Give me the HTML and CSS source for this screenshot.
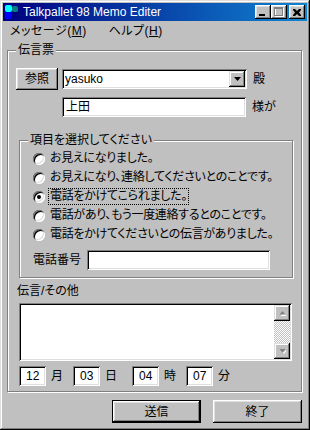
FILE: index.html
```html
<!DOCTYPE html>
<html lang="ja">
<head>
  <meta charset="UTF-8">
  <title>Talkpallet 98 Memo Editer</title>
  <link rel="stylesheet" href="styles.css">
</head>
<body>

  <div class="window">
    <div class="titlebar">
      <svg class="app-icon" width="16" height="16" viewBox="0 0 16 16">
        <rect x="1" y="1" width="7" height="7" rx="2" fill="#00ffff"/>
        <rect x="8" y="2" width="6" height="6" rx="2" fill="#008080"/>
        <rect x="1" y="8" width="7" height="7" rx="2" fill="#0000ff"/>
        <rect x="8" y="8" width="6" height="6" rx="2" fill="#000080"/>
      </svg>
      <span class="title">Talkpallet 98 Memo Editer</span>
      <div class="title-buttons">
        <span class="tbtn">
          <svg width="8" height="7" viewBox="0 0 8 7"><rect x="0" y="5" width="6" height="2" fill="#000"/></svg>
        </span>
        <span class="tbtn">
          <svg width="10" height="10" viewBox="0 0 10 10">
            <rect x="1.5" y="1.5" width="8" height="8" fill="none" stroke="#fff"/>
            <rect x="0.5" y="0.5" width="8" height="8" fill="none" stroke="#808080"/>
            <rect x="0" y="1" width="9" height="1" fill="#808080"/>
          </svg>
        </span>
        <span class="tbtn close">
          <svg width="8" height="7" viewBox="0 0 8 7">
            <path d="M0 0h2l2 2 2-2h2v1l-2 2.5 2 2.5v1h-2l-2-2-2 2h-2v-1l2-2.5-2-2.5z" fill="#000"/>
          </svg>
        </span>
      </div>
    </div>

    <div class="menubar">
      <span class="menu-item">メッセージ(<u>M</u>)</span>
      <span class="menu-item">ヘルプ(<u>H</u>)</span>
    </div>

    <div class="content">
      <fieldset class="group main-group">
        <legend>伝言票</legend>

        <div class="row to-row">
          <span class="btn ref">参照</span>
          <div class="field combo">
            <span class="combo-text">yasuko</span>
            <span class="combo-btn">
              <svg width="7" height="4" viewBox="0 0 7 4"><path d="M0 0h7l-3.5 4z" fill="#000"/></svg>
            </span>
          </div>
          <span class="suffix">殿</span>
        </div>

        <div class="row name-row">
          <div class="field name">上田</div>
          <span class="suffix">様が</span>
        </div>

        <fieldset class="group choice-group">
          <legend>項目を選択してください</legend>
          <div class="radio"><span class="dot"></span><span class="radio-text">お見えになりました。</span></div>
          <div class="radio"><span class="dot"></span><span class="radio-text">お見えになり、連絡してくださいとのことです。</span></div>
          <div class="radio checked"><span class="dot"></span><span class="radio-text focus">電話をかけてこられました。</span></div>
          <div class="radio"><span class="dot"></span><span class="radio-text">電話があり、もう一度連絡するとのことです。</span></div>
          <div class="radio"><span class="dot"></span><span class="radio-text">電話をかけてくださいとの伝言がありました。</span></div>
          <div class="row tel-row">
            <span class="tel-label">電話番号</span>
            <div class="field tel"></div>
          </div>
        </fieldset>

        <div class="memo-label">伝言/その他</div>
        <div class="field memo">
          <div class="memo-text"></div>
          <div class="scrollbar">
            <span class="sbtn">
              <svg width="7" height="5" viewBox="0 0 7 5"><path d="M3.5 1l3 3h-6z" fill="#fff" transform="translate(1 1)"/><path d="M3.5 0l3 3.5h-6z" fill="#808080"/></svg>
            </span>
            <span class="track"></span>
            <span class="sbtn">
              <svg width="7" height="5" viewBox="0 0 7 5"><path d="M0.5 0h6l-3 3.5z" fill="#808080"/><path d="M4 4l3-3v1.5l-2 2.5z" fill="#fff"/></svg>
            </span>
          </div>
        </div>

        <div class="row date-row">
          <div class="date-unit"><div class="field num">12</div><span class="unit">月</span></div>
          <div class="date-unit"><div class="field num">03</div><span class="unit">日</span></div>
          <div class="date-unit wide"><div class="field num">04</div><span class="unit">時</span></div>
          <div class="date-unit"><div class="field num">07</div><span class="unit">分</span></div>
        </div>
      </fieldset>

      <div class="actions">
        <span class="btn default">送信</span>
        <span class="btn">終了</span>
      </div>
    </div>
  </div>

</body>
</html>
```

FILE: styles.css
```css
body {
  margin: 0;
  font-family: "Liberation Sans", "Noto Sans CJK JP", sans-serif;
  font-size: 12px;
  line-height: 14px;
  font-feature-settings: "palt";
  color: #000;
  background-color: #c0c0c0;
}

.window {
  width: 310px;
  height: 430px;
  box-sizing: border-box;
  padding: 3px;
  background-color: #c0c0c0;
  box-shadow: inset -1px -1px #000, inset 1px 1px #dfdfdf,
              inset -2px -2px #808080, inset 2px 2px #fff;
}

/* title bar */
.titlebar {
  height: 18px;
  display: flex;
  align-items: center;
  background: linear-gradient(90deg, #000080, #1084d0);
  color: #fff;
}

.app-icon {
  margin-left: 1px;
  margin-right: 3px;
}

.title {
  line-height: 18px;
}

.title-buttons {
  margin-left: auto;
  margin-right: 2px;
  display: flex;
}

.tbtn {
  width: 16px;
  height: 14px;
  box-sizing: border-box;
  display: flex;
  align-items: center;
  justify-content: center;
  background-color: #c0c0c0;
  box-shadow: inset -1px -1px #000, inset 1px 1px #fff,
              inset -2px -2px #808080, inset 2px 2px #dfdfdf;
}

.tbtn.close {
  margin-left: 2px;
}

/* menu */
.menubar {
  height: 19px;
  display: flex;
  align-items: center;
  padding-left: 7px;
}

.menu-item {
  margin-right: 22px;
  letter-spacing: 0.5px;
}

.content {
  padding-left: 4px;
}

/* group boxes */
.group {
  margin: 0;
  border: 1px solid #808080;
  box-shadow: inset 1px 1px #fff, 1px 1px #fff;
  min-width: 0;
}

.group legend {
  padding: 0 2px;
  height: 14px;
  line-height: 14px;
  background-color: #c0c0c0;
}

.main-group {
  margin-top: 3px;
  width: 295px;
  box-sizing: border-box;
  padding: 0 0 5px 8px;
}

.row {
  display: flex;
  align-items: center;
}

/* 3D fields */
.field {
  box-sizing: border-box;
  background-color: #fff;
  box-shadow: inset 1px 1px #808080, inset -1px -1px #fff,
              inset 2px 2px #000, inset -2px -2px #dfdfdf;
}

.btn {
  box-sizing: border-box;
  display: flex;
  align-items: center;
  justify-content: center;
  background-color: #c0c0c0;
  box-shadow: inset -1px -1px #000, inset 1px 1px #fff,
              inset -2px -2px #808080, inset 2px 2px #dfdfdf;
}

.to-row {
  margin-top: 11px;
}

.ref {
  width: 42px;
  height: 22px;
}

.combo {
  margin-left: 4px;
  width: 185px;
  height: 20px;
  display: flex;
  align-items: center;
  padding: 2px;
}

.combo-text {
  flex: 1;
  padding-left: 1px;
}

.combo-btn {
  width: 16px;
  height: 16px;
  display: flex;
  align-items: center;
  justify-content: center;
  background-color: #c0c0c0;
  box-shadow: inset -1px -1px #000, inset 1px 1px #dfdfdf,
              inset -2px -2px #808080, inset 2px 2px #fff;
}

.suffix {
  margin-left: 6px;
}

.name-row {
  margin-top: 7px;
  padding-left: 46px;
}

.name {
  width: 184px;
  height: 20px;
  padding: 2px 0 0 4px;
  line-height: 16px;
}

/* choices */
.choice-group {
  margin: 16px 0 0 3px;
  width: 274px;
  box-sizing: border-box;
  padding: 2px 0 7px 13px;
}

.choice-group > legend {
  margin-left: -5px;
}

.radio {
  height: 19px;
  display: flex;
  align-items: center;
}

.dot {
  width: 12px;
  height: 12px;
  box-sizing: border-box;
  border-radius: 50%;
  background-color: #fff;
  box-shadow: inset 1px 1px #808080, inset -1px -1px #fff,
              inset 2px 2px #000, inset -2px -2px #dfdfdf;
  display: flex;
  align-items: center;
  justify-content: center;
}

.checked .dot::after {
  content: "";
  width: 4px;
  height: 4px;
  border-radius: 50%;
  background-color: #000;
}

.radio-text {
  margin-left: 3px;
  padding: 0 1px;
  line-height: 15px;
  letter-spacing: -0.3px;
  border: 1px dotted transparent;
}

.radio-text.focus {
  border-color: #000;
}

.tel-row {
  margin-top: 6px;
}

.tel {
  margin-left: 6px;
  width: 183px;
  height: 20px;
}

/* memo */
.memo-label {
  margin-top: 6px;
  margin-left: 1px;
  height: 14px;
}

.memo {
  margin: 5px 0 0 3px;
  width: 273px;
  height: 58px;
  padding: 2px;
  display: flex;
}

.memo-text {
  flex: 1;
}

.scrollbar {
  width: 16px;
  display: flex;
  flex-direction: column;
}

.sbtn {
  height: 16px;
  display: flex;
  align-items: center;
  justify-content: center;
  background-color: #c0c0c0;
  box-shadow: inset -1px -1px #000, inset 1px 1px #dfdfdf,
              inset -2px -2px #808080, inset 2px 2px #fff;
}

.track {
  flex: 1;
  background-color: #c0c0c0;
  background-image: conic-gradient(#fff 25%, transparent 0 50%, #fff 0 75%, transparent 0);
  background-size: 2px 2px;
}

/* date */
.date-row {
  margin: 5px 0 0 3px;
}

.date-unit {
  display: flex;
  align-items: center;
  margin-right: 10px;
}

.date-unit.wide {
  margin-left: 5px;
}

.num {
  width: 27px;
  height: 20px;
  padding: 2px 0 0 7px;
  line-height: 16px;
}

.unit {
  margin-left: 5px;
}

/* bottom buttons */
.actions {
  margin-top: 8px;
  display: flex;
  justify-content: flex-end;
  gap: 12px;
  padding-right: 5px;
}

.actions .btn {
  width: 89px;
  height: 23px;
}

.actions .btn.default {
  box-shadow: inset 0 0 0 1px #000, inset -2px -2px #000, inset 2px 2px #fff,
              inset -3px -3px #808080, inset 3px 3px #dfdfdf;
}
```
